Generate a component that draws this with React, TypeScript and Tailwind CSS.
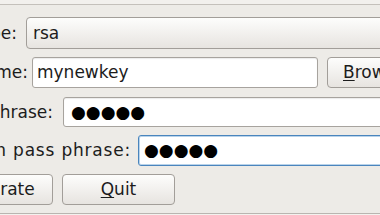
import React from "react";

const entry =
  "h-full bg-white border border-[#a7a39e] rounded-[3px] shadow-[inset_0_1px_1px_rgba(0,0,0,0.08)] flex items-center";

const button =
  "h-full rounded-[4px] border border-[#a29e99] bg-gradient-to-b from-[#fdfdfc] to-[#e7e4e0] flex items-center justify-center shrink-0";

// labels are wider than the visible area; right-align them so only their tail shows
const label = "-ml-[200px] text-right shrink-0 whitespace-nowrap";

export default function App() {
  return (
    <div className="w-[380px] h-[215px] overflow-hidden bg-[#edebe7] text-[17px] leading-none text-[#1c1c1c] font-['DejaVu_Sans',sans-serif] flex flex-col">
      {/* frame edge */}
      <div className="h-[5px] shrink-0 bg-[#f2f0ed] border-b border-[#c4c0bb]" />

      {/* Key type */}
      <div className="flex items-center h-[32px] mt-[12px] shrink-0">
        <div className={`${label} w-[217px]`}>Key type:</div>
        <div className={`${button} ml-[9px] w-[400px] justify-start pl-[6px]`}>rsa</div>
      </div>

      {/* Key name */}
      <div className="flex items-center h-[31px] mt-[8px] shrink-0">
        <div className={`${label} w-[228px]`}>Key name:</div>
        <div className={`${entry} ml-[4px] w-[286px] pl-[4px] shrink-0`}>mynewkey</div>
        <div className={`${button} ml-[9px] w-[110px] justify-start pl-[15px]`}>
          <span>
            <span className="underline underline-offset-2">B</span>rowse...
          </span>
        </div>
      </div>

      {/* Pass phrase */}
      <div className="flex items-center h-[30px] mt-[9px] shrink-0">
        <div className={`${label} w-[253px]`}>Pass phrase:</div>
        <div className={`${entry} ml-[10px] w-[340px] pl-[7px] shrink-0`}>
          <span className="text-black">●●●●●</span>
        </div>
      </div>

      {/* Confirmation pass phrase */}
      <div className="flex items-center h-[31px] mt-[8px] shrink-0">
        <div className={`${label} w-[331px] tracking-[0.8px]`}>Confirmation pass phrase:</div>
        <div className="h-full ml-[7px] w-[300px] shrink-0 bg-white border border-[#4a85bd] rounded-[3px] shadow-[inset_0_0_0_1px_#b9d3ea] flex items-center pl-[5px]">
          <span className="text-black">●●●●●</span>
        </div>
      </div>

      {/* Buttons */}
      <div className="flex items-center h-[31px] mt-[8px] shrink-0">
        <div className={`${button} -ml-[60px] w-[113px] pr-[3px]`}>Generate</div>
        <div className={`${button} ml-[9px] w-[113px]`}>
          <span>
            <span className="underline underline-offset-2">Q</span>uit
          </span>
        </div>
      </div>

      <div className="mt-[8px] h-[1px] shrink-0 bg-[#b9b5b0]" />
      <div className="flex-1 bg-[#f3f1ee]" />
    </div>
  );
}
